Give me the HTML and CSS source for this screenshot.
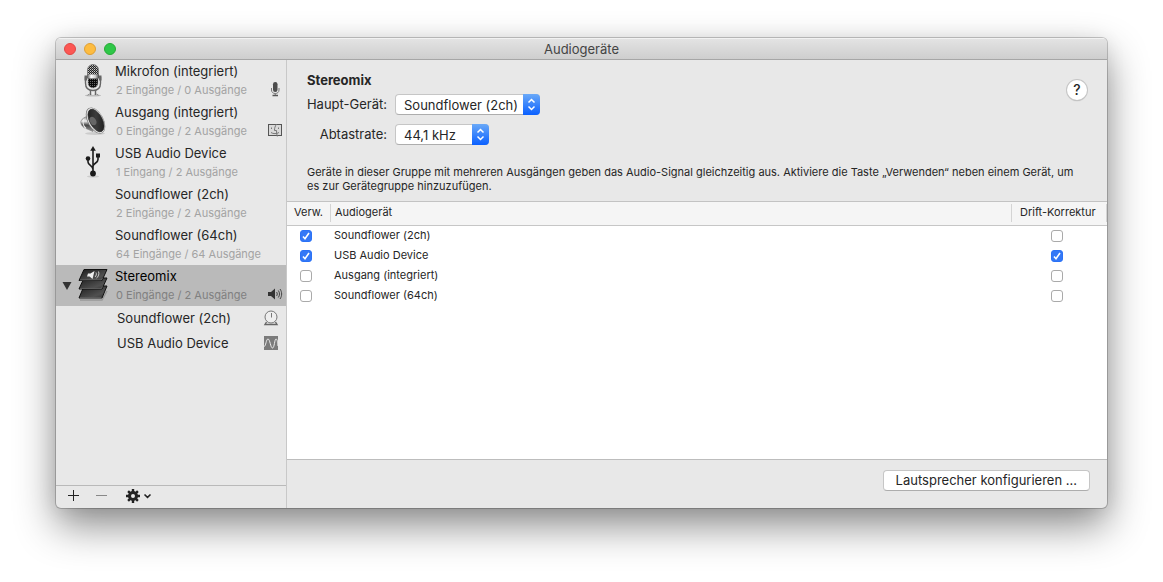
FILE: index.html
```html
<!DOCTYPE html>
<html lang="de">
<head>
<meta charset="utf-8">
<title>Audiogeräte</title>
<link rel="stylesheet" href="styles.css">
</head>
<body>
<div class="window">
  <header class="titlebar">
    <div class="lights">
      <button class="light close" aria-label="Schließen"></button>
      <button class="light minimize" aria-label="Minimieren"></button>
      <button class="light maximize" aria-label="Maximieren"></button>
    </div>
    <h1 class="title">Audiogeräte</h1>
  </header>
  <div class="body">
    <aside class="sidebar">
      <ul class="devices">
        <li class="device">
          <span class="icon">
            <svg width="30" height="34" viewBox="0 0 30 34">
              <defs>
                <linearGradient id="metal" x1="0" x2="1" y1="0" y2="0">
                  <stop offset="0" stop-color="#555"/><stop offset=".35" stop-color="#fff"/><stop offset=".7" stop-color="#ccc"/><stop offset="1" stop-color="#444"/>
                </linearGradient>
                <pattern id="mesh" width="2" height="2" patternUnits="userSpaceOnUse">
                  <rect width="2" height="2" fill="#222"/><rect width="1" height="1" fill="#ccc"/><rect x="1" y="1" width="1" height="1" fill="#888"/>
                </pattern>
                <pattern id="mesh-dark" width="2" height="2" patternUnits="userSpaceOnUse">
                  <rect width="2" height="2" fill="#0a0a0a"/><rect width="1" height="1" fill="#666"/>
                </pattern>
              </defs>
              <ellipse cx="15" cy="32.500" rx="8" ry="1" fill="#bbb"/>
              <path d="M12.500 27v5M17.500 27v5" stroke="#666" stroke-width="1.400"/>
              <path d="M15 27v5" stroke="#eee" stroke-width="1.400"/>
              <path d="M9.500 32.300l2-1.300M20.500 32.300l-2-1.300" stroke="#888"/>
              <path d="M7.500 14v6c0 5.200 3.200 7.500 7.500 7.500s7.500-2.300 7.500-7.500v-6" fill="#e6e6e6" stroke="#666" stroke-width="1.400"/>
              <rect x="6.500" y="12.500" width="2.500" height="5" fill="#666"/><rect x="21" y="12.500" width="2.500" height="5" fill="#666"/>
              <path d="M10 15h10v5a5 5 0 0 1-10 0z" fill="url(#mesh-dark)" stroke="#999" stroke-width=".5"/>
              <path d="M9.500 12V7a5.500 5.500 0 0 1 11 0v5z" fill="url(#mesh)" stroke="#777" stroke-width=".8"/>
              <rect x="9" y="11.500" width="12" height="4" fill="url(#metal)"/>
            </svg>
          </span>
          <span class="info"><span class="name">Mikrofon (integriert)</span><span class="detail">2 Eingänge / 0 Ausgänge</span></span>
          <svg class="badge" width="16" height="16" viewBox="0 0 16 16">
            <rect x="6" y="0" width="4.500" height="10" rx="2.200" fill="#4c4c4c"/>
            <path d="M4.500 6v2c0 2.200 1.500 3.500 3.750 3.500S12 10.200 12 8V6M8.250 11.500v2" fill="none" stroke="#777"/>
            <path d="M5.500 13.500h5.500" stroke="#555" stroke-width="1.500"/>
          </svg>
        </li>
        <li class="device">
          <span class="icon">
            <svg width="30" height="34" viewBox="0 0 30 34">
              <defs>
                <linearGradient id="cone" x1="0" x2="1" y1="0" y2="1">
                  <stop offset="0" stop-color="#1b1b1b"/><stop offset=".5" stop-color="#3c3c3c"/><stop offset="1" stop-color="#151515"/>
                </linearGradient>
                <linearGradient id="magnet" x1="0" x2="0" y1="0" y2="1">
                  <stop offset="0" stop-color="#888"/><stop offset=".35" stop-color="#eee"/><stop offset=".6" stop-color="#444"/><stop offset="1" stop-color="#999"/>
                </linearGradient>
              </defs>
              <ellipse cx="17" cy="29.500" rx="10" ry="1.500" fill="#ccc"/>
              <path d="M10 12c-3 1-6 2.500-7 5s1.500 6.500 5 7.500l7 3-1-16z" fill="url(#magnet)" stroke="#777" stroke-width=".6"/>
              <path d="M6 15c-1.500 3-1 7 2 9.500" fill="none" stroke="#eee" stroke-width="1.200"/>
              <ellipse cx="17.500" cy="16.500" rx="8" ry="14.200" transform="rotate(-28 17.500 16.500)" fill="#777"/>
              <ellipse cx="17.700" cy="16.500" rx="7.400" ry="13.600" transform="rotate(-28 17.700 16.500)" fill="#eee"/>
              <ellipse cx="18" cy="16.500" rx="6.400" ry="12.400" transform="rotate(-28 18 16.500)" fill="url(#cone)" stroke="#333" stroke-width=".6"/>
              <ellipse cx="15" cy="17" rx="3" ry="4.500" transform="rotate(-28 15 17)" fill="#666"/>
            </svg>
          </span>
          <span class="info"><span class="name">Ausgang (integriert)</span><span class="detail">0 Eingänge / 2 Ausgänge</span></span>
          <svg class="badge" width="16" height="16" viewBox="0 0 16 16">
            <rect x="1.500" y="1.500" width="13" height="11" fill="#d9d9d9" stroke="#555"/>
            <path d="M9.500 1c-1.500 2.500-2 4-2 6.500h2c0 2 .2 4 .8 6M4.500 4.500V6M11.500 4.500V6M4 9.500c2 1.500 6 1.500 8 0" fill="none" stroke="#777"/>
          </svg>
        </li>
        <li class="device">
          <span class="icon">
            <svg width="30" height="34" viewBox="0 0 30 34">
              <ellipse cx="15" cy="31.500" rx="6" ry="1" fill="#ccc"/>
              <path d="M15 5v24M15 24.500c0-4-5-4-5-7.500V14M15 21.500c0-3.500 5-3 5-7V11" fill="none" stroke="#1b1b1b" stroke-width="1.600"/>
              <path d="M15 1l2.800 4.800h-5.600z" fill="#1b1b1b"/>
              <circle cx="15" cy="28.500" r="2.900" fill="#1b1b1b"/><circle cx="10" cy="13.500" r="2.300" fill="#1b1b1b"/><rect x="18" y="8.500" width="4" height="4" fill="#1b1b1b"/>
            </svg>
          </span>
          <span class="info"><span class="name">USB Audio Device</span><span class="detail">1 Eingang / 2 Ausgänge</span></span>
        </li>
        <li class="device">
          <span class="icon"></span>
          <span class="info"><span class="name">Soundflower (2ch)</span><span class="detail">2 Eingänge / 2 Ausgänge</span></span>
        </li>
        <li class="device">
          <span class="icon"></span>
          <span class="info"><span class="name">Soundflower (64ch)</span><span class="detail">64 Eingänge / 64 Ausgänge</span></span>
        </li>
        <li class="device selected">
          <button class="disclosure" aria-label="Stereomix ausblenden" aria-expanded="true">
            <svg width="10" height="8" viewBox="0 0 10 8"><path d="M.5 0h9L5 8z" fill="#333"/></svg>
          </button>
          <span class="icon">
            <svg width="30" height="34" viewBox="0 0 30 34">
              <defs>
                <linearGradient id="sheet" x1="0" x2="1" y1="0" y2="1"><stop offset="0" stop-color="#1c1c1c"/><stop offset=".7" stop-color="#505050"/><stop offset="1" stop-color="#333"/></linearGradient>
              </defs>
              <path d="M2 32h22l5-9" fill="none" stroke="#999" stroke-width="1.500"/>
              <g fill="url(#sheet)" stroke="#111">
                <path d="M6 18h23l-5 12H1z"/>
                <path d="M6 10h23l-5 11H1z"/>
                <path d="M6 1.500h23l-5 11H1z"/>
              </g>
              <path d="M2 20.500h21.500l1-2M2 12h21.500l1-2M2 29.500h21.500" fill="none" stroke="#888" stroke-width=".5"/>
              <path d="M10 5.500h2.500l4-2.500-2 8-3-2.500H9z" fill="#eee"/>
              <path d="M18 4.500c.8 1.500.2 3.500-1 4.500M20.500 3.500c1 2 0 5.500-2 6.500" fill="none" stroke="#ccc"/>
            </svg>
          </span>
          <span class="info"><span class="name">Stereomix</span><span class="detail">0 Eingänge / 2 Ausgänge</span></span>
          <svg class="badge" width="16" height="16" viewBox="0 0 16 16">
            <path d="M1 5h3l4-3.500v11L4 9H1z" fill="#333"/>
            <path d="M9.500 5c1 1 1 3 0 4M11.300 3.500c1.600 2 1.600 5 0 7M13 2c2.200 3 2.200 7 0 10" fill="none" stroke="#444"/>
          </svg>
        </li>
        <li class="device child">
          <span class="name">Soundflower (2ch)</span>
          <svg class="badge" width="16" height="16" viewBox="0 0 16 16">
            <circle cx="8" cy="7" r="6" fill="#eee" stroke="#777"/>
            <path d="M8.500 3v4.500" fill="none" stroke="#777"/><path d="M3.500 12L2 14.500h12L12.500 12" fill="none" stroke="#666" stroke-width="1.400"/>
          </svg>
        </li>
        <li class="device child">
          <span class="name">USB Audio Device</span>
          <svg class="badge" width="16" height="16" viewBox="0 0 16 16">
            <rect x="1" y="1" width="14" height="14" fill="#7b7b7b"/>
            <path d="M1 11.500C3 11.500 3 4 5 4s2.500 9 4.500 9S11.500 4 13 4s1.500 4 2 7" fill="none" stroke="#eee"/>
          </svg>
        </li>
      </ul>
      <footer class="toolbar">
        <button class="tool" aria-label="Hinzufügen"><svg width="12" height="12" viewBox="0 0 12 12"><path d="M0 5.500h11M5.500 0v11" stroke="#222"/></svg></button>
        <button class="tool" aria-label="Entfernen"><svg width="12" height="12" viewBox="0 0 12 12"><path d="M0 5.500h11" stroke="#888"/></svg></button>
        <button class="tool gear" aria-label="Aktionen">
          <svg width="26" height="14" viewBox="0 0 26 14">
            <circle cx="7" cy="7" r="3.500" fill="none" stroke="#222" stroke-width="3"/>
            <path d="M7 0v3M7 11v3M0 7h3M11 7h3M2.100 2.100l2 2M9.900 9.900l2 2M2.100 11.900l2-2M9.900 4.100l2-2" stroke="#222" stroke-width="2.400"/>
            <path d="M18.500 5.500l3 2.800 3-2.800" fill="none" stroke="#222" stroke-width="1.600"/>
          </svg>
        </button>
      </footer>
    </aside>
    <main class="main">
      <section class="settings">
        <div class="top">
          <div>
            <h2 class="heading">Stereomix</h2>
            <div class="fields">
              <label for="master">Haupt-Gerät:</label>
              <span class="popup wide">
                <select id="master"><option>Soundflower (2ch)</option><option>USB Audio Device</option></select>
                <svg class="arrows" viewBox="0 0 17 21"><path d="M5.500 8.500l3-3 3 3M5.500 12.500l3 3 3-3"/></svg>
              </span>
              <label for="rate">Abtastrate:</label>
              <span class="popup">
                <select id="rate"><option>44,1 kHz</option><option>48,0 kHz</option></select>
                <svg class="arrows" viewBox="0 0 17 21"><path d="M5.500 8.500l3-3 3 3M5.500 12.500l3 3 3-3"/></svg>
              </span>
            </div>
          </div>
          <button class="help" aria-label="Hilfe">?</button>
        </div>
        <p class="note">Geräte in dieser Gruppe mit mehreren Ausgängen geben das Audio-Signal gleichzeitig aus. Aktiviere die Taste „Verwenden“ neben einem Gerät, um es zur Gerätegruppe hinzuzufügen.</p>
      </section>
      <div class="list">
        <table class="table">
          <thead>
            <tr><th class="use"><span>Verw.</span></th><th class="dev"><span>Audiogerät</span></th><th class="drift"><span>Drift-Korrektur</span></th></tr>
          </thead>
          <tbody>
            <tr><td class="check"><input type="checkbox" aria-labelledby="d1" checked></td><td id="d1">Soundflower (2ch)</td><td class="check"><input type="checkbox" aria-label="Drift-Korrektur Soundflower (2ch)"></td></tr>
            <tr><td class="check"><input type="checkbox" aria-labelledby="d2" checked></td><td id="d2">USB Audio Device</td><td class="check"><input type="checkbox" aria-label="Drift-Korrektur USB Audio Device" checked></td></tr>
            <tr><td class="check"><input type="checkbox" aria-labelledby="d3"></td><td id="d3">Ausgang (integriert)</td><td class="check"><input type="checkbox" aria-label="Drift-Korrektur Ausgang (integriert)"></td></tr>
            <tr><td class="check"><input type="checkbox" aria-labelledby="d4"></td><td id="d4">Soundflower (64ch)</td><td class="check"><input type="checkbox" aria-label="Drift-Korrektur Soundflower (64ch)"></td></tr>
          </tbody>
        </table>
      </div>
      <footer class="actions">
        <button class="push">Lautsprecher konfigurieren ...</button>
      </footer>
    </main>
  </div>
</div>
</body>
</html>
```
FILE: styles.css
```css
* {
  box-sizing: border-box;
}

body {
  margin: 0;
  min-height: 100vh;
  padding: 38px 56px 74px;
  display: flex;
  background: #fff;
  color: #262626;
  font: 13px/16px Inter, "Liberation Sans", sans-serif;
}

button,
select {
  font: inherit;
  color: inherit;
}

button {
  padding: 0;
  border: 0;
  background: none;
}

svg {
  display: block;
  flex: none;
}

.window {
  flex: 1;
  min-width: 0;
  display: flex;
  flex-direction: column;
  overflow: hidden;
  border-radius: 5px;
  background: #e8e8e8;
  box-shadow: 0 0 0 1px rgba(0, 0, 0, 0.2), 0 18px 40px rgba(0, 0, 0, 0.45), 0 2px 20px rgba(0, 0, 0, 0.08);
}

.titlebar {
  display: grid;
  grid-template-columns: 1fr auto 1fr;
  align-items: center;
  height: 22px;
  padding: 0 8px;
  border-bottom: 1px solid #a6a6a6;
  background: linear-gradient(#e4e4e4, #cecece);
  box-shadow: inset 0 1px #f2f2f2;
}

.lights {
  display: flex;
  gap: 8px;
}

.light {
  width: 12px;
  height: 12px;
  border: 1px solid;
  border-radius: 50%;
}

.close {
  background: #fc5753;
  border-color: #df4744;
}

.minimize {
  background: #fdbc40;
  border-color: #de9f34;
}

.maximize {
  background: #2fc748;
  border-color: #27aa35;
}

.title {
  margin: 0;
  font-size: 13px;
  font-weight: 400;
  color: #444;
}

.body {
  flex: 1;
  display: flex;
}

.sidebar {
  flex: none;
  width: 231px;
  display: flex;
  flex-direction: column;
  border-right: 1px solid #c8c8c8;
}

.devices {
  flex: 1;
  margin: 0;
  padding: 0;
  list-style: none;
}

.device {
  position: relative;
  display: flex;
  gap: 7px;
  height: 41px;
  padding: 3px 3px 3px 22px;
}

.icon {
  flex: none;
  width: 30px;
}

.info {
  flex: 1;
  display: flex;
  flex-direction: column;
  gap: 3px;
}

.detail {
  padding-left: 1px;
  font-size: 11px;
  color: #a3a3a3;
}

.badge {
  align-self: flex-end;
}

.selected {
  background: #bababa;
  color: #000;
}

.selected .detail {
  color: #808080;
}

.disclosure {
  position: absolute;
  left: 6px;
  top: 17px;
}

.child {
  height: 25px;
  align-items: center;
  justify-content: space-between;
  padding: 0 7px 2px 61px;
}

.child .badge {
  align-self: center;
}

.toolbar {
  display: flex;
  align-items: center;
  gap: 16px;
  height: 23px;
  padding: 0 12px 2px;
  border-top: 1px solid #b9b9b9;
}

.gear {
  margin-left: 2px;
}

.main {
  flex: 1;
  min-width: 0;
  display: flex;
  flex-direction: column;
}

.settings {
  padding: 12px 20px 8px;
}

.top {
  display: flex;
  justify-content: space-between;
  align-items: flex-start;
}

.heading {
  margin: 0 0 6px;
  font-size: 13px;
  font-weight: 700;
}

.fields {
  display: grid;
  grid-template-columns: 80px auto;
  gap: 9px 8px;
  justify-items: start;
}

.fields label {
  justify-self: end;
  padding-top: 2px;
  white-space: nowrap;
}

.popup {
  position: relative;
  width: 94px;
}

.wide {
  width: 145px;
}

.popup select {
  display: block;
  width: 100%;
  height: 21px;
  padding: 0 17px 0 8px;
  appearance: none;
  border: 1px solid #c6c6c6;
  border-bottom-color: #adadad;
  border-radius: 4px;
  background: #fff;
}

.arrows {
  position: absolute;
  top: 0;
  right: 0;
  width: 17px;
  height: 21px;
  border-radius: 0 4px 4px 0;
  background: linear-gradient(#6aa9f8, #0a60ff);
  fill: none;
  stroke: #fff;
  stroke-width: 1.500;
  pointer-events: none;
}

.help {
  width: 20px;
  height: 20px;
  margin-top: 8px;
  border-radius: 50%;
  background: #fff;
  box-shadow: 0 0 0 1px #c6c6c6, 0 1px 1px #999;
  font-size: 14px;
  font-weight: 500;
}

.note {
  margin: 20px 0 0;
  font-size: 11px;
  line-height: 14px;
}

.list {
  flex: 1;
  border-top: 1px solid #c3c3c3;
  border-bottom: 1px solid #bdbdbd;
  background: #fff;
}

.table {
  width: 100%;
  table-layout: fixed;
  border-collapse: separate;
  border-spacing: 0;
  font-size: 11px;
}

.table th {
  height: 24px;
  padding: 2px 0 3px;
  border-bottom: 1px solid #c6c6c6;
  background: #f5f5f5;
  font-weight: 400;
  text-align: left;
}

.table th span {
  display: block;
  padding: 0 0 2px 4px;
  border-right: 1px solid #d4d4d4;
}

.table .use {
  width: 44px;
}

.table .use span {
  padding-left: 7px;
}

.table .drift {
  width: 95px;
}

.table .drift span {
  padding-left: 8px;
}

.table td {
  height: 20px;
  padding: 0 3px 2px;
}

.table .check {
  padding: 0 5px 0 0;
  text-align: center;
}

.table .check:first-child {
  padding-right: 6px;
}

.table input {
  display: block;
  width: 12px;
  height: 12px;
  margin: 0 auto;
  appearance: none;
  border: 1px solid #aaa;
  border-radius: 3px;
  background: #fff;
}

.table input:checked {
  border-color: #2b72f6;
  background: #3478f6 url("data:image/svg+xml,%3Csvg xmlns='http://www.w3.org/2000/svg' viewBox='0 0 10 10'%3E%3Cpath d='M2 5.500l2 2.300L8 2' fill='none' stroke='white' stroke-width='1.600'/%3E%3C/svg%3E");
}

.actions {
  display: flex;
  justify-content: flex-end;
  height: 48px;
  padding: 10px 17px;
}

.push {
  height: 21px;
  padding: 0 12px 1px;
  border: 1px solid #c6c6c6;
  border-bottom-color: #adadad;
  border-radius: 4px;
  background: #fff;
  white-space: nowrap;
}
```
